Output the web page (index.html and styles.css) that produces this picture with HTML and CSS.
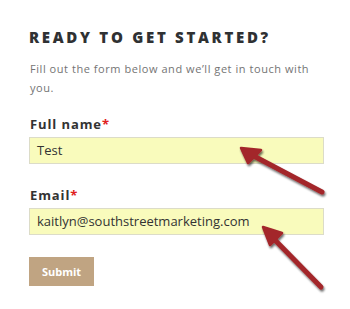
FILE: index.html
```html
<!DOCTYPE html>
<html>
<head>
<meta charset="utf-8">
<link rel="stylesheet" href="styles.css">
</head>
<body>
<div class="page">
  <form class="form">
    <h2 class="title">READY TO GET STARTED?</h2>
    <p class="intro">Fill out the form below and we’ll get in touch with you.</p>
    <div class="field">
      <label class="label">Full name<span class="req">*</span></label>
      <div class="input">Test</div>
    </div>
    <div class="field">
      <label class="label">Email<span class="req">*</span></label>
      <div class="input">kaitlyn@southstreetmarketing.com</div>
    </div>
    <div class="button">Submit</div>
  </form>
  <svg class="arrows" width="350" height="309" viewBox="0 0 350 309">
    <defs>
      <filter id="sh" x="-20%" y="-20%" width="140%" height="140%">
        <feGaussianBlur in="SourceAlpha" stdDeviation="1.2"/>
        <feOffset dx="1" dy="2" result="b"/>
        <feComponentTransfer><feFuncA type="linear" slope="0.6"/></feComponentTransfer>
        <feMerge><feMergeNode/><feMergeNode in="SourceGraphic"/></feMerge>
      </filter>
    </defs>
    <g filter="url(#sh)" fill="#a3262a" stroke="#a3262a" stroke-linejoin="round" stroke-linecap="round">
      <line x1="250" y1="154" x2="322" y2="192" stroke-width="5"/>
      <polygon points="241,148 261,150 248,163" stroke-width="2.5"/>
      <line x1="270" y1="235" x2="321" y2="287" stroke-width="5"/>
      <polygon points="263,227 282,233 270,245" stroke-width="2.5"/>
    </g>
  </svg>
</div>
</body>
</html>
```
FILE: styles.css
```css
html, body {
  margin: 0;
  padding: 0;
  background: #ffffff;
}
.page {
  position: relative;
  width: 350px;
  height: 309px;
  overflow: hidden;
  font-family: "Open Sans", "Liberation Sans", sans-serif;
}
.form {
  display: flex;
  flex-direction: column;
  padding: 27px 27px 0 29px;
}
.title {
  margin: 0;
  font-size: 15px;
  line-height: 20px;
  font-weight: 800;
  letter-spacing: 2.7px;
  color: #2f3133;
}
.intro {
  margin: 12px 0 0 1px;
  font-size: 11px;
  line-height: 19px;
  color: #747474;
  letter-spacing: 0.55px;
  width: 292px;
}
.field {
  display: flex;
  flex-direction: column;
  margin-top: 18px;
}
.field + .field {
  margin-top: 22px;
}
.label {
  font-size: 13px;
  line-height: 18px;
  font-weight: 700;
  color: #333333;
  letter-spacing: 0.9px;
  margin-left: 1px;
}
.req {
  color: #e02020;
}
.input {
  margin-top: 4px;
  height: 25px;
  box-sizing: content-box;
  border: 1px solid #dcdcc8;
  background: #f9fbbc;
  font-size: 13px;
  line-height: 25px;
  color: #333333;
  padding-left: 7px;
  width: 286px;
}
.button {
  margin-top: 22px;
  width: 65px;
  height: 29px;
  background: #c0a482;
  color: #ffffff;
  font-weight: 700;
  font-size: 11px;
  line-height: 29px;
  text-align: center;
}
.arrows {
  position: absolute;
  left: 0;
  top: 0;
}
```
